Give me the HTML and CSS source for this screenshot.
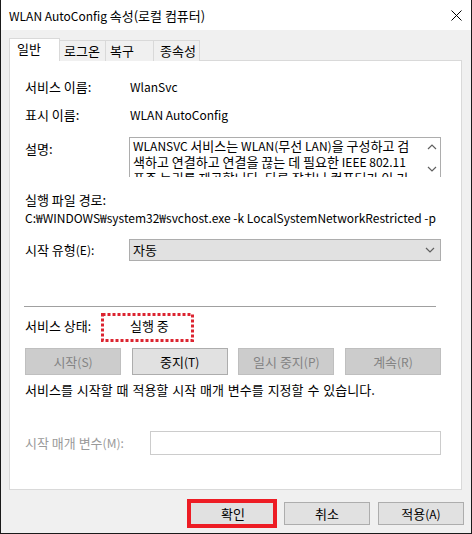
FILE: index.html
```html
<html>
    <head>
        <title>WLAN AutoConfig 속성(로컬 컴퓨터)</title>
        <meta charset="UTF-8">
        <link rel="stylesheet" href="styles.css">
    </head>
    <body>
        <div class="window">
            <div class="titlebar">
                <span class="title"><span class="en">WLAN AutoConfig </span>속성(로컬 컴퓨터)</span>
                <svg class="close" width="11" height="11" viewBox="0 0 11 11">
                    <path d="M0.5 0.5 L10.5 10.5 M10.5 0.5 L0.5 10.5" stroke="#000" stroke-width="1" fill="none"/>
                </svg>
            </div>
            <div class="content">
                <div class="tabs">
                    <div class="tab active">일반</div>
                    <div class="tab t-logon">로그온</div>
                    <div class="tab t-recover">복구</div>
                    <div class="tab t-deps">종속성</div>
                </div>
                <div class="panel">
                    <div class="row r-name">
                        <span class="label">서비스 이름:</span>
                        <span class="en">WlanSvc</span>
                    </div>
                    <div class="row r-display">
                        <span class="label">표시 이름:</span>
                        <span class="en">WLAN AutoConfig</span>
                    </div>
                    <div class="row r-desc">
                        <span class="label desc-label">설명:</span>
                        <div class="textbox">
                            <div class="textbox-text"><span class="en">WLANSVC </span>서비스는 <span class="en">WLAN(</span>무선 <span class="en">LAN)</span>을 구성하고 검<br>색하고 연결하고 연결을 끊는 데 필요한 <span class="en">IEEE 802.11</span><br>표준 논리를 제공합니다. 다른 장치나 컴퓨터가 이 기</div>
                            <svg class="scroll" width="17" height="39" viewBox="0 0 17 39">
                                <path d="M5 11 L9 7 L13 11" stroke="#606060" stroke-width="1.2" fill="none"/>
                                <path d="M5 29 L9 33 L13 29" stroke="#606060" stroke-width="1.2" fill="none"/>
                            </svg>
                        </div>
                    </div>
                    <div class="line r-pathlabel">실행 파일 경로:</div>
                    <div class="line r-path en">C:₩WINDOWS₩system32₩svchost.exe -k LocalSystemNetworkRestricted -p</div>
                    <div class="row r-type">
                        <span class="label">시작 유형<span class="en">(E):</span></span>
                        <div class="select">
                            <span>자동</span>
                            <svg width="10" height="6" viewBox="0 0 10 6">
                                <path d="M1 1 L5 5 L9 1" stroke="#606060" stroke-width="1.2" fill="none"/>
                            </svg>
                        </div>
                    </div>
                    <div class="separator"></div>
                    <div class="row r-status">
                        <span class="label">서비스 상태<span class="en">:</span></span>
                        <span class="status">
                            실행 중
                            <svg class="mark-dots" width="93" height="29" viewBox="0 0 93 29">
                                <rect x="1.5" y="1.5" width="90" height="26" fill="none" stroke="#dc2430" stroke-width="3" stroke-dasharray="3 2"/>
                            </svg>
                        </span>
                    </div>
                    <div class="buttons">
                        <div class="btn disabled">시작<span class="en">(S)</span></div>
                        <div class="btn">중지<span class="en">(T)</span></div>
                        <div class="btn disabled">일시 중지<span class="en">(P)</span></div>
                        <div class="btn disabled">계속<span class="en">(R)</span></div>
                    </div>
                    <div class="line r-hint">서비스를 시작할 때 적용할 시작 매개 변수를 지정할 수 있습니다.</div>
                    <div class="row r-param">
                        <span class="label param-label">시작 매개 변수<span class="en">(M):</span></span>
                        <div class="input"></div>
                    </div>
                </div>
                <div class="footer">
                    <div class="btn footer-btn ok">확인<span class="mark-box"></span></div>
                    <div class="btn footer-btn">취소</div>
                    <div class="btn footer-btn">적용<span class="en">(A)</span></div>
                </div>
            </div>
        </div>
    </body>
</html>
```
FILE: styles.css
```css
body {
    margin: 0;
    font-family: "Noto Sans CJK KR", sans-serif;
    font-size: 13px;
    color: #000;
}

/* latin runs are a touch smaller than the hangul */
.en {
    font-size: 12px;
}

.window {
    width: 472px;
    height: 534px;
    box-sizing: border-box;
    border: 1px solid #1a1a1a;
    border-top: none;
    background: #f0f0f0;
}

.titlebar {
    height: 30px;
    background: #fff;
    display: flex;
    align-items: center;
    padding-left: 8px;
}

.close {
    margin-left: auto;
    margin-right: 9px;
}

.content {
    padding: 8px 7px 0 8px;
}

/* tabs */
.tabs {
    display: flex;
    align-items: flex-end;
    height: 22px;
}

.tab {
    box-sizing: border-box;
    height: 21px;
    margin-bottom: -1px;
    margin-left: -1px;
    padding-left: 4px;
    line-height: 19px;
    border: 1px solid #d9d9d9;
    border-bottom: none;
    background: #f0f0f0;
}

.tab.active {
    position: relative;
    z-index: 1;
    height: 23px;
    width: 51px;
    margin-left: 0;
    padding-left: 7px;
    line-height: 20px;
    background: #fff;
}

.t-logon { width: 47px; }
.t-recover { width: 49px; }
.t-deps { width: 47px; padding-left: 6px; }

.panel {
    box-sizing: border-box;
    width: 453px;
    height: 430px;
    border: 1px solid #d9d9d9;
    background: #fff;
    padding: 18px 15px 0 15px;
}

.row {
    display: flex;
    align-items: center;
}

.line, .row {
    line-height: 16px;
    white-space: nowrap;
}

.label {
    width: 105px;
    flex-shrink: 0;
}

.r-display { margin-top: 12px; }

.r-desc {
    margin-top: 14px;
    align-items: flex-start;
}

.desc-label { padding-top: 4px; width: 104px; }

.textbox {
    box-sizing: border-box;
    width: 312px;
    height: 40px;
    border: 1px solid #adadad;
    border-bottom: none;
    display: flex;
    overflow: hidden;
}

.textbox-text {
    flex: 1;
    padding-left: 3px;
    overflow: hidden;
}

.scroll { flex-shrink: 0; }

.r-pathlabel { margin-top: 15px; }
.r-path { margin-top: 2px; }

.r-type {
    margin-top: 13px;
    height: 22px;
}

.r-type .label { width: 104px; }

.select {
    box-sizing: border-box;
    width: 312px;
    height: 22px;
    border: 1px solid #adadad;
    background: #e1e1e1;
    display: flex;
    align-items: center;
    justify-content: space-between;
    padding: 0 5px 0 3px;
}

.separator {
    margin: 45px 0 0 -1px;
    width: 412px;
    height: 1px;
    background: #a0a0a0;
}

.r-status { margin-top: 11px; }

.status {
    position: relative;
}

.mark-dots {
    position: absolute;
    left: -29px;
    top: -5px;
}

.buttons {
    margin-top: 14px;
    width: 416px;
    display: flex;
    justify-content: space-between;
}

.btn {
    box-sizing: border-box;
    width: 96px;
    height: 27px;
    border: 1px solid #adadad;
    background: #e1e1e1;
    display: flex;
    align-items: center;
    justify-content: center;
}

.btn.disabled {
    background: #cccccc;
    border-color: #bfbfbf;
    color: #838383;
}

.r-hint {
    margin-top: 7px;
    word-spacing: 1px;
}

.r-param {
    margin-top: 33px;
    height: 24px;
    color: #9a9a9a;
}

.param-label { width: 125px; }

.input {
    box-sizing: border-box;
    width: 291px;
    height: 24px;
    border: 1px solid #cccccc;
    background: #fff;
}

.footer {
    margin-top: 12px;
    display: flex;
    justify-content: flex-end;
    gap: 8px;
}

.footer-btn {
    width: 86px;
    height: 23px;
}

.ok {
    position: relative;
}

.mark-box {
    position: absolute;
    left: -4px;
    right: -2px;
    top: -4px;
    bottom: -4px;
    border: 4px solid #ed1c24;
}
```
